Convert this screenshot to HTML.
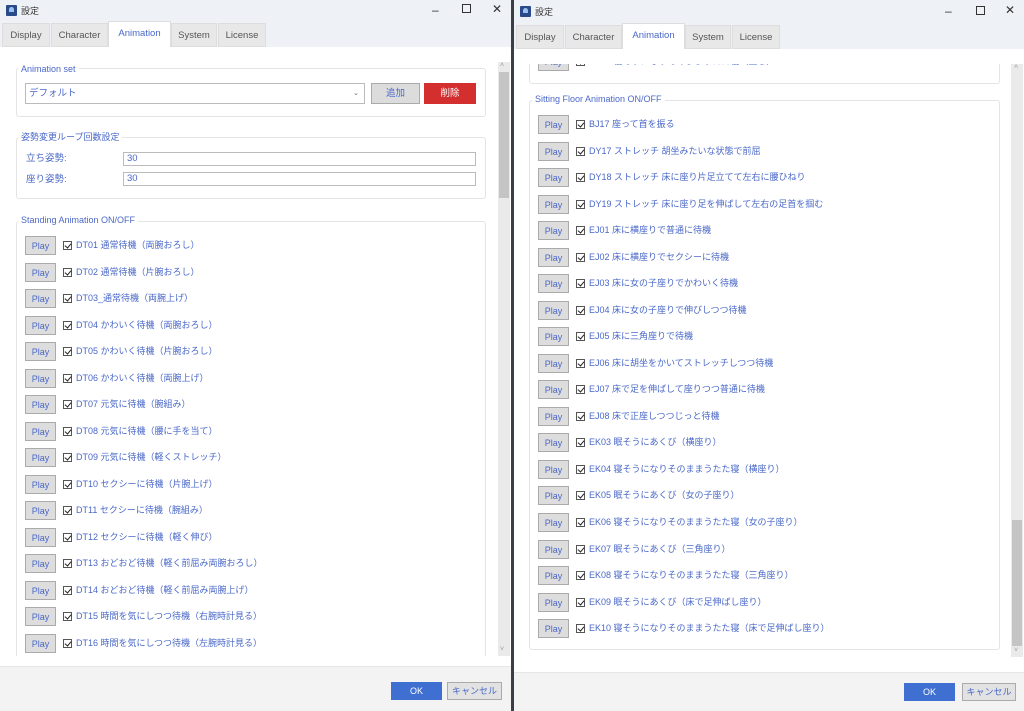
<!DOCTYPE html>
<html><head><meta charset="utf-8">
<style>
*{box-sizing:border-box;margin:0;padding:0}
body{width:1024px;height:711px;overflow:hidden;background:#3a3f46;font-family:"Liberation Sans","Noto Sans CJK JP",sans-serif;font-size:10px;color:#4a68c8;position:relative}
.win{position:absolute;top:0;height:711px;background:#fff;overflow:hidden}
.title{position:absolute;left:0;right:0;top:0;height:22px;background:#eef1f5;color:#333}
.ico{position:absolute;left:6px;top:5px;width:11px;height:11px;background:#2a4a8a;border-radius:1px}
.ico:after{content:"";position:absolute;left:3px;top:2px;width:5px;height:5px;background:#9cc0f0;border-radius:50% 50% 0 0}
.ttl{position:absolute;left:21px;top:5px;font-size:9px;color:#333;line-height:12px}
.ctl{position:absolute;top:3px;font-size:12px;color:#333;line-height:14px}
.tabs{position:absolute;left:0;right:0;top:21px;height:26px;background:#eef1f5}
.tab{position:absolute;top:2px;height:24px;background:#e8e8e8;border:1px solid #ddd;color:#555;font-size:9.5px;text-align:center;line-height:24px}
.tab.on{background:#fff;top:0;height:26px;color:#4a68c8;border-bottom:none;line-height:24px}
.gb{position:absolute;border:1px solid #e4e4e4;border-radius:3px}
.gt{position:absolute;background:#fff;padding:0 3px;font-size:9px;line-height:12px;color:#4a68c8}
.btn{position:absolute;background:#ddd;border:1px solid #aaa;font-size:9.5px;text-align:center;color:#4a68c8}
.inp{position:absolute;border:1px solid #bbb;background:#fff;font-size:9.5px;padding-left:3px;color:#4a68c8}
.row{position:absolute;left:0;height:20px;white-space:nowrap}
.row .p{position:absolute;left:0;top:0;width:31px;height:19px;background:#ddd;border:1px solid #aaa;text-align:center;line-height:18px;font-size:9px}
.row .c{position:absolute;left:38px;top:5px;width:9px;height:9px;border:1px solid #555;background:#fff}
.row .c:after{content:"";position:absolute;left:2px;top:0px;width:3px;height:5px;border:solid #222;border-width:0 1.5px 1.5px 0;transform:rotate(40deg)}
.row .t{position:absolute;left:51px;top:0;height:19px;line-height:19px;font-size:9px}
.sb{position:absolute;background:#eaeaea}
.th{position:absolute;background:#c4c4c4}
.foot{position:absolute;left:0;right:0;bottom:0;background:#f3f3f3;border-top:1px solid #e6e6e6}
.ok{position:absolute;background:#3f6fd0;color:#fff;font-size:9px;text-align:center;line-height:18px}
.cn{position:absolute;background:#e2e2e2;border:1px solid #aaa;color:#4a68c8;font-size:9px;text-align:center;line-height:16px}
.lbl{position:absolute;font-size:9.5px;line-height:12px}
</style></head><body>

<!-- LEFT WINDOW -->
<div class="win" style="left:0;width:511px">
 <div class="title"><div class="ico"></div><div class="ttl">設定</div>
  <div class="ctl" style="left:432px">&#8211;</div><div class="ctl" style="left:462px;top:4px;width:9px;height:9px;border:1px solid #333"></div><div class="ctl" style="left:492px;top:2px">✕</div></div>
 <div class="tabs">
  <div class="tab" style="left:2px;width:48px">Display</div>
  <div class="tab" style="left:51px;width:57px">Character</div>
  <div class="tab on" style="left:108px;width:63px">Animation</div>
  <div class="tab" style="left:171px;width:46px">System</div>
  <div class="tab" style="left:218px;width:48px">License</div>
 </div>
 <div style="position:absolute;left:0;top:62px;width:497px;height:594px;overflow:hidden">
  <div class="gb" style="left:16px;top:6px;width:470px;height:49px"></div>
  <div class="gt" style="left:18px;top:1px">Animation set</div>
  <div class="inp" style="left:25px;top:21px;width:340px;height:21px;line-height:19px">デフォルト<span style="position:absolute;right:5px;top:0;font-size:7px;color:#666">⌄</span></div>
  <div class="btn" style="left:371px;top:21px;width:49px;height:21px;line-height:19px;background:#dcdcdc">追加</div>
  <div class="btn" style="left:424px;top:21px;width:52px;height:21px;line-height:19px;background:#d32f2f;border-color:#d32f2f;color:#fff">削除</div>
  <div class="gb" style="left:16px;top:75px;width:470px;height:62px"></div>
  <div class="gt" style="left:18px;top:69px">姿勢変更ループ回数設定</div>
  <div class="lbl" style="left:26px;top:91px">立ち姿勢:</div>
  <div class="inp" style="left:123px;top:90px;width:353px;height:14px;line-height:12px">30</div>
  <div class="lbl" style="left:26px;top:112px">座り姿勢:</div>
  <div class="inp" style="left:123px;top:110px;width:353px;height:14px;line-height:12px">30</div>
  <div class="gb" style="left:16px;top:159px;width:470px;height:460px"></div>
  <div class="gt" style="left:18px;top:152px">Standing Animation ON/OFF</div>
  <div style="position:absolute;left:25px;top:174px">
   <div class="row" style="top:0px"><div class="p">Play</div><div class="c"></div><div class="t">DT01 通常待機（両腕おろし）</div></div>
   <div class="row" style="top:26.5px"><div class="p">Play</div><div class="c"></div><div class="t">DT02 通常待機（片腕おろし）</div></div>
   <div class="row" style="top:53.1px"><div class="p">Play</div><div class="c"></div><div class="t">DT03_通常待機（両腕上げ）</div></div>
   <div class="row" style="top:79.6px"><div class="p">Play</div><div class="c"></div><div class="t">DT04 かわいく待機（両腕おろし）</div></div>
   <div class="row" style="top:106.1px"><div class="p">Play</div><div class="c"></div><div class="t">DT05 かわいく待機（片腕おろし）</div></div>
   <div class="row" style="top:132.7px"><div class="p">Play</div><div class="c"></div><div class="t">DT06 かわいく待機（両腕上げ）</div></div>
   <div class="row" style="top:159.2px"><div class="p">Play</div><div class="c"></div><div class="t">DT07 元気に待機（腕組み）</div></div>
   <div class="row" style="top:185.7px"><div class="p">Play</div><div class="c"></div><div class="t">DT08 元気に待機（腰に手を当て）</div></div>
   <div class="row" style="top:212.2px"><div class="p">Play</div><div class="c"></div><div class="t">DT09 元気に待機（軽くストレッチ）</div></div>
   <div class="row" style="top:238.8px"><div class="p">Play</div><div class="c"></div><div class="t">DT10 セクシーに待機（片腕上げ）</div></div>
   <div class="row" style="top:265.3px"><div class="p">Play</div><div class="c"></div><div class="t">DT11 セクシーに待機（腕組み）</div></div>
   <div class="row" style="top:291.8px"><div class="p">Play</div><div class="c"></div><div class="t">DT12 セクシーに待機（軽く伸び）</div></div>
   <div class="row" style="top:318.4px"><div class="p">Play</div><div class="c"></div><div class="t">DT13 おどおど待機（軽く前屈み両腕おろし）</div></div>
   <div class="row" style="top:344.9px"><div class="p">Play</div><div class="c"></div><div class="t">DT14 おどおど待機（軽く前屈み両腕上げ）</div></div>
   <div class="row" style="top:371.4px"><div class="p">Play</div><div class="c"></div><div class="t">DT15 時間を気にしつつ待機（右腕時計見る）</div></div>
   <div class="row" style="top:397.9px"><div class="p">Play</div><div class="c"></div><div class="t">DT16 時間を気にしつつ待機（左腕時計見る）</div></div>
  </div>
 </div>
 <div class="sb" style="left:498px;top:62px;width:12px;height:594px"></div>
 <div class="th" style="left:499px;top:72px;width:10px;height:126px"></div>
 <div style="position:absolute;left:500px;top:62px;font-size:7px;color:#999">˄</div>
 <div style="position:absolute;left:500px;top:646px;font-size:7px;color:#999">˅</div>
 <div class="foot" style="top:666px"></div>
 <div class="ok" style="left:391px;top:682px;width:51px;height:18px">OK</div>
 <div class="cn" style="left:447px;top:682px;width:55px;height:18px">キャンセル</div>
</div>

<!-- RIGHT WINDOW -->
<div class="win" style="left:514px;width:510px">
 <div class="title" style="height:24px"><div class="ico" style="top:6px"></div><div class="ttl" style="top:6px">設定</div>
  <div class="ctl" style="left:431px;top:4px">&#8211;</div><div class="ctl" style="left:462px;top:6px;width:9px;height:9px;border:1px solid #333"></div><div class="ctl" style="left:491px;top:3px">✕</div></div>
 <div class="tabs" style="top:23px">
  <div class="tab" style="left:2px;width:48px">Display</div>
  <div class="tab" style="left:51px;width:57px">Character</div>
  <div class="tab on" style="left:108px;width:63px">Animation</div>
  <div class="tab" style="left:171px;width:46px">System</div>
  <div class="tab" style="left:218px;width:48px">License</div>
 </div>
 <div style="position:absolute;left:0;top:64px;width:497px;height:593px;overflow:hidden">
  <div class="gb" style="left:15px;top:-20px;width:471px;height:40px"></div>
  <div class="row" style="left:24px;top:-12px"><div class="p">Play</div><div class="c"></div><div class="t">EK02 寝そうになりそのままうたた寝（立ち）</div></div>
  <div class="gb" style="left:15px;top:36px;width:471px;height:550px"></div>
  <div class="gt" style="left:18px;top:29px">Sitting Floor Animation ON/OFF</div>
  <div style="position:absolute;left:24px;top:51px">
   <div class="row" style="top:0px"><div class="p">Play</div><div class="c"></div><div class="t">BJ17 座って首を振る</div></div>
   <div class="row" style="top:26.5px"><div class="p">Play</div><div class="c"></div><div class="t">DY17 ストレッチ 胡坐みたいな状態で前屈</div></div>
   <div class="row" style="top:53.1px"><div class="p">Play</div><div class="c"></div><div class="t">DY18 ストレッチ 床に座り片足立てて左右に腰ひねり</div></div>
   <div class="row" style="top:79.6px"><div class="p">Play</div><div class="c"></div><div class="t">DY19 ストレッチ 床に座り足を伸ばして左右の足首を掴む</div></div>
   <div class="row" style="top:106.1px"><div class="p">Play</div><div class="c"></div><div class="t">EJ01 床に横座りで普通に待機</div></div>
   <div class="row" style="top:132.7px"><div class="p">Play</div><div class="c"></div><div class="t">EJ02 床に横座りでセクシーに待機</div></div>
   <div class="row" style="top:159.2px"><div class="p">Play</div><div class="c"></div><div class="t">EJ03 床に女の子座りでかわいく待機</div></div>
   <div class="row" style="top:185.7px"><div class="p">Play</div><div class="c"></div><div class="t">EJ04 床に女の子座りで伸びしつつ待機</div></div>
   <div class="row" style="top:212.2px"><div class="p">Play</div><div class="c"></div><div class="t">EJ05 床に三角座りで待機</div></div>
   <div class="row" style="top:238.8px"><div class="p">Play</div><div class="c"></div><div class="t">EJ06 床に胡坐をかいてストレッチしつつ待機</div></div>
   <div class="row" style="top:265.3px"><div class="p">Play</div><div class="c"></div><div class="t">EJ07 床で足を伸ばして座りつつ普通に待機</div></div>
   <div class="row" style="top:291.8px"><div class="p">Play</div><div class="c"></div><div class="t">EJ08 床で正座しつつじっと待機</div></div>
   <div class="row" style="top:318.4px"><div class="p">Play</div><div class="c"></div><div class="t">EK03 眠そうにあくび（横座り）</div></div>
   <div class="row" style="top:344.9px"><div class="p">Play</div><div class="c"></div><div class="t">EK04 寝そうになりそのままうたた寝（横座り）</div></div>
   <div class="row" style="top:371.4px"><div class="p">Play</div><div class="c"></div><div class="t">EK05 眠そうにあくび（女の子座り）</div></div>
   <div class="row" style="top:397.9px"><div class="p">Play</div><div class="c"></div><div class="t">EK06 寝そうになりそのままうたた寝（女の子座り）</div></div>
   <div class="row" style="top:424.5px"><div class="p">Play</div><div class="c"></div><div class="t">EK07 眠そうにあくび（三角座り）</div></div>
   <div class="row" style="top:451px"><div class="p">Play</div><div class="c"></div><div class="t">EK08 寝そうになりそのままうたた寝（三角座り）</div></div>
   <div class="row" style="top:477.5px"><div class="p">Play</div><div class="c"></div><div class="t">EK09 眠そうにあくび（床で足伸ばし座り）</div></div>
   <div class="row" style="top:504.1px"><div class="p">Play</div><div class="c"></div><div class="t">EK10 寝そうになりそのままうたた寝（床で足伸ばし座り）</div></div>
  </div>
 </div>
 <div class="sb" style="left:497px;top:64px;width:12px;height:593px"></div>
 <div class="th" style="left:498px;top:520px;width:10px;height:126px"></div>
 <div style="position:absolute;left:500px;top:64px;font-size:7px;color:#999">˄</div>
 <div style="position:absolute;left:500px;top:647px;font-size:7px;color:#999">˅</div>
 <div class="foot" style="top:672px"></div>
 <div class="ok" style="left:390px;top:683px;width:51px;height:18px">OK</div>
 <div class="cn" style="left:448px;top:683px;width:54px;height:18px">キャンセル</div>
</div>
</body></html>
